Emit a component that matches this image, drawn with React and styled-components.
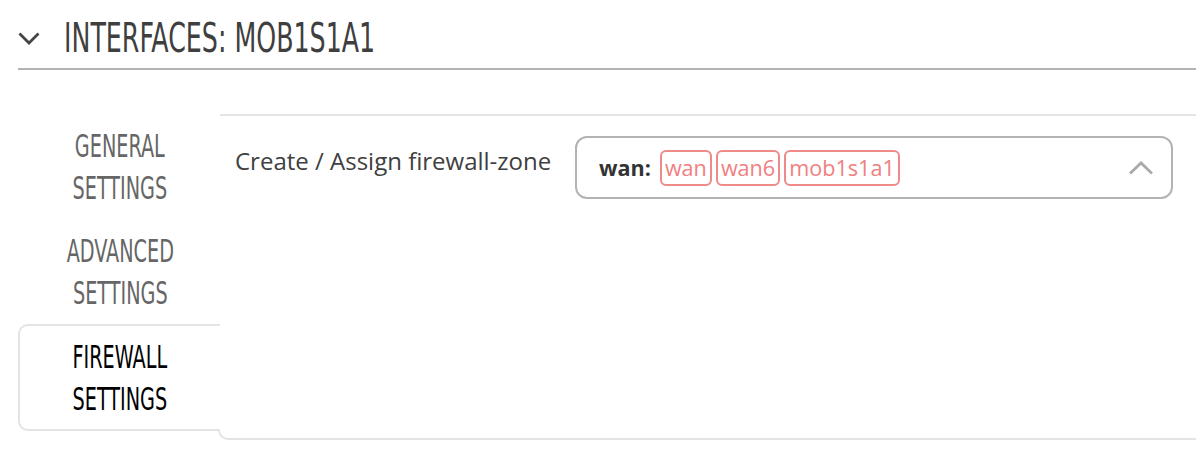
import styled, { createGlobalStyle } from "styled-components";

const Global = createGlobalStyle`
  html, body {
    margin: 0;
    padding: 0;
    background: #fff;
  }
  body {
    font-family: "Open Sans", "Liberation Sans", sans-serif;
    overflow: hidden;
  }
`;

const Page = styled.div`
  width: 1196px;
  height: 460px;
  padding-left: 18px;
  box-sizing: border-box;
`;

const Header = styled.div`
  display: flex;
  align-items: center;
  height: 70px;
  padding-top: 8px;
  box-sizing: border-box;
  border-bottom: 2px solid #b3b3b3;
`;

const Toggle = styled.span`
  display: flex;
  width: 46px;
  color: #444;
`;

const Title = styled.h2`
  margin: 0;
  font-family: "Liberation Sans Narrow", "DejaVu Sans Condensed", sans-serif;
  font-weight: 400;
  font-size: 40px;
  line-height: 1;
  color: #3f3f3f;
  transform: scaleX(0.703);
  transform-origin: left center;
  white-space: nowrap;
`;

const Body = styled.div`
  display: flex;
  margin-top: 44px;
`;

const Tabs = styled.div`
  width: 200px;
  flex-shrink: 0;
  display: flex;
  flex-direction: column;
  padding-bottom: 9px;
`;

const Tab = styled.div`
  position: relative;
  z-index: 1;
  height: ${(p) => (p.$active ? "107px" : "105px")};
  margin-right: -2px;
  display: flex;
  align-items: center;
  justify-content: center;
  box-sizing: border-box;
  background: #fff;
  border: 2px solid ${(p) => (p.$active ? "#e4e4e4" : "transparent")};
  border-right: none;
  border-radius: 10px 0 0 10px;
  cursor: pointer;
`;

const TabLabel = styled.span`
  display: inline-block;
  font-family: "Liberation Sans Narrow", "DejaVu Sans Condensed", sans-serif;
  font-size: 32px;
  line-height: 42px;
  text-align: center;
  text-transform: uppercase;
  color: ${(p) => (p.$active ? "#000" : "#666")};
  transform: scaleX(0.668);
`;

const Panel = styled.div`
  flex: 1;
  border: 2px solid #e4e4e4;
  border-right: none;
  border-bottom-left-radius: 10px;
  padding: 20px 23px 0 15px;
  background: #fff;
`;

const Row = styled.div`
  display: flex;
  align-items: flex-start;
`;

const Label = styled.div`
  width: 340px;
  flex-shrink: 0;
  padding-top: 8px;
  font-size: 24px;
  color: #404040;
`;

const Select = styled.div`
  flex: 1;
  height: 63px;
  box-sizing: border-box;
  border: 2px solid #b3b3b3;
  border-radius: 12px;
  display: flex;
  align-items: center;
  padding: 0 17px 0 22px;
`;

const Zone = styled.span`
  font-weight: 700;
  font-size: 21.6px;
  color: #333;
  margin-right: 9px;
`;

const Tags = styled.div`
  display: flex;
  gap: 4px;
  flex: 1;
`;

const Tag = styled.span`
  border: 2px solid #ef8a8a;
  border-radius: 6px;
  padding: 0 3px;
  height: 36px;
  box-sizing: border-box;
  display: flex;
  align-items: center;
  font-size: 21.6px;
  color: #f08080;
`;

const Caret = styled.span`
  display: flex;
  color: #aaa;
`;

const tabs = [
  ["General", "Settings"],
  ["Advanced", "Settings"],
  ["Firewall", "Settings"],
];

export default function App() {
  return (
    <Page>
      <Global />
      <Header>
        <Toggle>
          <svg width="22" height="13" viewBox="0 0 22 13" fill="none">
            <path d="M1.5 1.5 L11 11 L20.5 1.5" stroke="currentColor" strokeWidth="2.8" />
          </svg>
        </Toggle>
        <Title>INTERFACES: MOB1S1A1</Title>
      </Header>
      <Body>
        <Tabs>
          {tabs.map(([a, b], i) => (
            <Tab key={a} $active={i === 2}>
              <TabLabel $active={i === 2}>
                {a}
                <br />
                {b}
              </TabLabel>
            </Tab>
          ))}
        </Tabs>
        <Panel>
          <Row>
            <Label>Create / Assign firewall-zone</Label>
            <Select>
              <Zone>wan:</Zone>
              <Tags>
                <Tag>wan</Tag>
                <Tag>wan6</Tag>
                <Tag>mob1s1a1</Tag>
              </Tags>
              <Caret>
                <svg width="26" height="14" viewBox="0 0 26 14" fill="none">
                  <path d="M2 12.5 L13 2 L24 12.5" stroke="currentColor" strokeWidth="2.8" />
                </svg>
              </Caret>
            </Select>
          </Row>
        </Panel>
      </Body>
    </Page>
  );
}
